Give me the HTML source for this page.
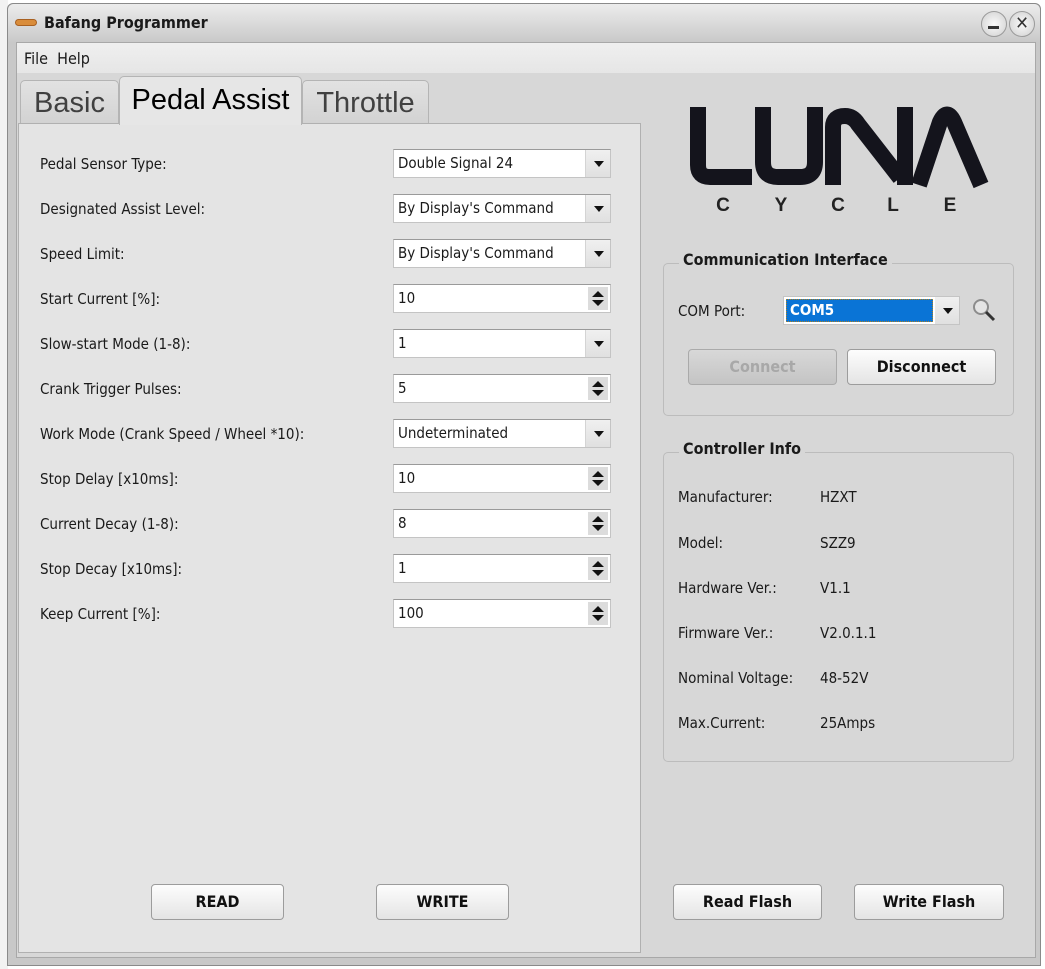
<!DOCTYPE html>
<html><head><meta charset="utf-8">
<style>
*{box-sizing:border-box;margin:0;padding:0}
body{width:1045px;height:969px;background:#fff;font-family:"DejaVu Sans Condensed","Liberation Sans",sans-serif;font-size:15px;color:#1a1a1a;position:relative;overflow:hidden}
.abs{position:absolute}
.win{left:7px;top:3px;width:1034px;height:963px;border:1px solid #8a8a8a;border-radius:6px 6px 0 0;background:#c8c8c8}
.title{left:8px;top:4px;width:1032px;height:38px;background:linear-gradient(#ececec,#c9c9c9);border-radius:6px 6px 0 0}
.content{left:16px;top:42px;width:1020px;height:916px;background:#d7d7d7;border:1px solid #a8a8a8}
.menu{left:17px;top:43px;width:1018px;height:30px;background:linear-gradient(#efefef,#e6e6e6)}
.tab{height:44px;border:1px solid #b4b4b4;border-bottom:none;border-radius:5px 5px 0 0;background:linear-gradient(#e2e2e2,#d2d2d2);font-family:"Liberation Sans",sans-serif;font-size:29px;color:#404040;text-align:center;line-height:44px}
.panel{left:18px;top:123px;width:623px;height:830px;background:#e4e4e4;border:1px solid #b0b0b0}
.lbl{left:40px;font-size:15px;height:20px;line-height:20px}
.fld{left:393px;width:218px;height:29px;background:#fff;border:1px solid #c4c4c4;border-top-color:#9a9a9a;padding-left:4px;line-height:26px;font-size:15px}
.dd{position:absolute;right:0;top:0;width:25px;height:27px;background:linear-gradient(#f0f0f0,#e0e0e0);border-left:1px solid #d4d4d4}
.dd:after{content:"";position:absolute;left:8px;top:11px;border-left:5px solid transparent;border-right:5px solid transparent;border-top:6px solid #111}
.sp{position:absolute;right:2px;top:2px;width:20px;height:23px;background:#dcdcdc}
.btn{height:36px;border:1px solid #9c9c9c;border-radius:4px;background:linear-gradient(#fdfdfd,#e4e4e4);font-weight:bold;text-align:center;line-height:34px;font-size:16px;color:#111}
.grp{border:1px solid #bcbcbc;border-radius:5px;background:#d7d7d7}
.gt{font-weight:bold;font-size:16px;background:#d7d7d7;padding:0 4px}
.info{font-size:15px}
</style></head><body>
<div class="abs" style="left:0;top:0;width:8px;height:969px;background:#f2f2f2"></div>
<div class="abs win"></div>
<div class="abs title"></div>
<div class="abs" style="left:15px;top:19px;width:22px;height:7px;border-radius:4px;background:#d98c3a;border:1px solid #a86020"></div>
<div class="abs" style="left:44px;top:13px;font-weight:bold;font-size:16px;color:#1a1a1a">Bafang Programmer</div>
<div class="abs" style="left:981px;top:11px;width:26px;height:26px;border-radius:50%;background:radial-gradient(#fafafa,#cfcfcf);border:1px solid #9a9a9a"></div>
<div class="abs" style="left:988px;top:26px;width:11px;height:3px;background:#333"></div>
<div class="abs" style="left:1009px;top:11px;width:26px;height:26px;border-radius:50%;background:radial-gradient(#fafafa,#cfcfcf);border:1px solid #9a9a9a;text-align:center;line-height:24px;font-weight:bold;font-size:18px;color:#333">✕</div>
<div class="abs content"></div>
<div class="abs menu"></div>
<div class="abs" style="left:24px;top:49px;font-size:16px">File&nbsp;&nbsp;Help</div>

<div class="abs tab" style="left:20px;top:80px;width:99px">Basic</div>
<div class="abs tab" style="left:302px;top:80px;width:127px">Throttle</div>
<div class="abs panel"></div>
<div class="abs tab" style="left:119px;top:76px;width:183px;height:49px;line-height:46px;background:#e6e6e6;color:#000;z-index:2">Pedal Assist</div>

<div class="abs lbl" style="top:154px">Pedal Sensor Type:</div>
<div class="abs fld" style="top:149px">Double Signal 24<span class="dd"></span></div>
<div class="abs lbl" style="top:199px">Designated Assist Level:</div>
<div class="abs fld" style="top:194px">By Display's Command<span class="dd"></span></div>
<div class="abs lbl" style="top:244px">Speed Limit:</div>
<div class="abs fld" style="top:239px">By Display's Command<span class="dd"></span></div>
<div class="abs lbl" style="top:289px">Start Current [%]:</div>
<div class="abs fld" style="top:284px">10<span class="sp"><svg width="20" height="23"><path d="M4 10 L10 4 L16 10Z M4 13 L10 19 L16 13Z" fill="#111"/></svg></span></div>
<div class="abs lbl" style="top:334px">Slow-start Mode (1-8):</div>
<div class="abs fld" style="top:329px">1<span class="dd"></span></div>
<div class="abs lbl" style="top:379px">Crank Trigger Pulses:</div>
<div class="abs fld" style="top:374px">5<span class="sp"><svg width="20" height="23"><path d="M4 10 L10 4 L16 10Z M4 13 L10 19 L16 13Z" fill="#111"/></svg></span></div>
<div class="abs lbl" style="top:424px">Work Mode (Crank Speed / Wheel *10):</div>
<div class="abs fld" style="top:419px">Undeterminated<span class="dd"></span></div>
<div class="abs lbl" style="top:469px">Stop Delay [x10ms]:</div>
<div class="abs fld" style="top:464px">10<span class="sp"><svg width="20" height="23"><path d="M4 10 L10 4 L16 10Z M4 13 L10 19 L16 13Z" fill="#111"/></svg></span></div>
<div class="abs lbl" style="top:514px">Current Decay (1-8):</div>
<div class="abs fld" style="top:509px">8<span class="sp"><svg width="20" height="23"><path d="M4 10 L10 4 L16 10Z M4 13 L10 19 L16 13Z" fill="#111"/></svg></span></div>
<div class="abs lbl" style="top:559px">Stop Decay [x10ms]:</div>
<div class="abs fld" style="top:554px">1<span class="sp"><svg width="20" height="23"><path d="M4 10 L10 4 L16 10Z M4 13 L10 19 L16 13Z" fill="#111"/></svg></span></div>
<div class="abs lbl" style="top:604px">Keep Current [%]:</div>
<div class="abs fld" style="top:599px">100<span class="sp"><svg width="20" height="23"><path d="M4 10 L10 4 L16 10Z M4 13 L10 19 L16 13Z" fill="#111"/></svg></span></div>

<div class="abs btn" style="left:151px;top:884px;width:133px">READ</div>
<div class="abs btn" style="left:376px;top:884px;width:133px">WRITE</div>
<div class="abs btn" style="left:673px;top:884px;width:149px">Read Flash</div>
<div class="abs btn" style="left:854px;top:884px;width:150px">Write Flash</div>

<svg class="abs" style="left:0;top:0" width="1045" height="230">
<g fill="none" stroke="#14141c" stroke-width="16">
<path d="M698 107 V165 Q698 177 710 177 H752"/>
<path d="M763 107 V162 Q763 177 778 177 H800 Q815 177 815 162 V107"/>
<path d="M833 185 V127 Q833 116 845 116 Q853 116 858 124 L900 178"/>
<path d="M905 107 V185"/>
<path d="M919 185 L940 122 Q947 107 954 122 L981 185"/>
</g>
<g font-family="Liberation Sans,sans-serif" font-weight="bold" font-size="19" fill="#222" text-anchor="middle">
<text x="723" y="211">C</text><text x="781" y="211">Y</text><text x="838" y="211">C</text><text x="893" y="211">L</text><text x="950" y="211">E</text>
</g>
</svg>

<div class="abs grp" style="left:663px;top:263px;width:351px;height:153px"></div>
<div class="abs gt" style="left:679px;top:250px">Communication Interface</div>
<div class="abs info" style="left:678px;top:302px">COM Port:</div>
<div class="abs" style="left:783px;top:296px;width:177px;height:29px;background:#fff;border:1px solid #c4c4c4"></div>
<div class="abs" style="left:786px;top:299px;width:147px;height:23px;background:#0a74d6;border:1px dotted #b08020;color:#fff;font-weight:bold;font-size:15px;line-height:21px;padding-left:3px">COM5</div>
<div class="abs" style="left:935px;top:297px;width:24px;height:27px;background:linear-gradient(#f0f0f0,#e0e0e0)"><span class="dd" style="width:24px;border:none"></span></div>
<svg class="abs" style="left:970px;top:296px" width="28" height="28"><circle cx="11" cy="11" r="7" fill="#e4e4e4" stroke="#8c8c8c" stroke-width="2"/><path d="M16 16 L24 24" stroke="#333" stroke-width="3"/></svg>
<div class="abs btn" style="left:688px;top:349px;width:149px;background:linear-gradient(#d8d8d8,#c4c4c4);color:#a8a8a8;border-color:#aaa">Connect</div>
<div class="abs btn" style="left:847px;top:349px;width:149px">Disconnect</div>

<div class="abs grp" style="left:663px;top:452px;width:351px;height:310px"></div>
<div class="abs gt" style="left:679px;top:439px">Controller Info</div>
<div class="abs info" style="left:678px;top:488px">Manufacturer:</div><div class="abs info" style="left:820px;top:488px">HZXT</div>
<div class="abs info" style="left:678px;top:534px">Model:</div><div class="abs info" style="left:820px;top:534px">SZZ9</div>
<div class="abs info" style="left:678px;top:579px">Hardware Ver.:</div><div class="abs info" style="left:820px;top:579px">V1.1</div>
<div class="abs info" style="left:678px;top:624px">Firmware Ver.:</div><div class="abs info" style="left:820px;top:624px">V2.0.1.1</div>
<div class="abs info" style="left:678px;top:669px">Nominal Voltage:</div><div class="abs info" style="left:820px;top:669px">48-52V</div>
<div class="abs info" style="left:678px;top:714px">Max.Current:</div><div class="abs info" style="left:820px;top:714px">25Amps</div>
</body></html>
